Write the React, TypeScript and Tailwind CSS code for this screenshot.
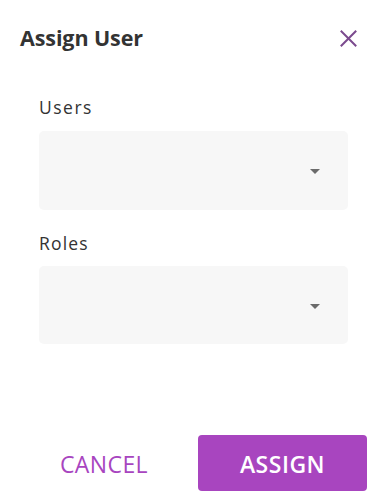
export default function App() {
  return (
    <div className="w-[383px] h-[503px] bg-white font-['Open_Sans',sans-serif] text-[#333] flex flex-col">
      {/* Header */}
      <div className="flex items-center justify-between pl-5 pr-[26px] pt-[23px]">
        <h2 className="text-[21.5px] font-bold leading-[30px] tracking-[-0.1px] text-[#333]">Assign User</h2>
        <button className="w-[18px] h-[18px] flex items-center justify-center">
          <svg width="17" height="17" viewBox="0 0 17 17">
            <path d="M1.5 1.5 L15.5 15.5 M15.5 1.5 L1.5 15.5" stroke="#7b4a8e" strokeWidth="2" strokeLinecap="square" />
          </svg>
        </button>
      </div>

      {/* Form */}
      <div className="flex flex-col pl-[39px] pr-[35px] pt-[42px]">
        <label className="text-[17.5px] leading-[24px] tracking-[1.5px] text-[#333]">Users</label>
        <div className="mt-[12px] h-[79px] rounded-[5px] bg-[#f7f7f7] flex items-center justify-end pr-[28px]">
          <span className="w-0 h-0 border-l-[5px] border-r-[5px] border-t-[5px] border-l-transparent border-r-transparent border-t-[#6b6b6b] mt-[2px]" />
        </div>

        <label className="mt-[21px] text-[17.5px] leading-[24px] tracking-[1.2px] text-[#333]">Roles</label>
        <div className="mt-[11px] h-[78px] rounded-[5px] bg-[#f7f7f7] flex items-center justify-end pr-[28px]">
          <span className="w-0 h-0 border-l-[5px] border-r-[5px] border-t-[5px] border-l-transparent border-r-transparent border-t-[#6b6b6b] mt-[2px]" />
        </div>
      </div>

      {/* Actions */}
      <div className="mt-auto mb-[12px] flex items-center justify-end pr-[16px]">
        <button className="w-[136px] h-[56px] text-[23px] text-[#a845bf] tracking-[0.4px] pt-[2px]">CANCEL</button>
        <button className="ml-[26px] w-[169px] h-[56px] rounded-[4px] bg-[#a845bf] text-white text-[23px] font-semibold tracking-[0.5px] pt-[2px]">
          ASSIGN
        </button>
      </div>
    </div>
  )
}
